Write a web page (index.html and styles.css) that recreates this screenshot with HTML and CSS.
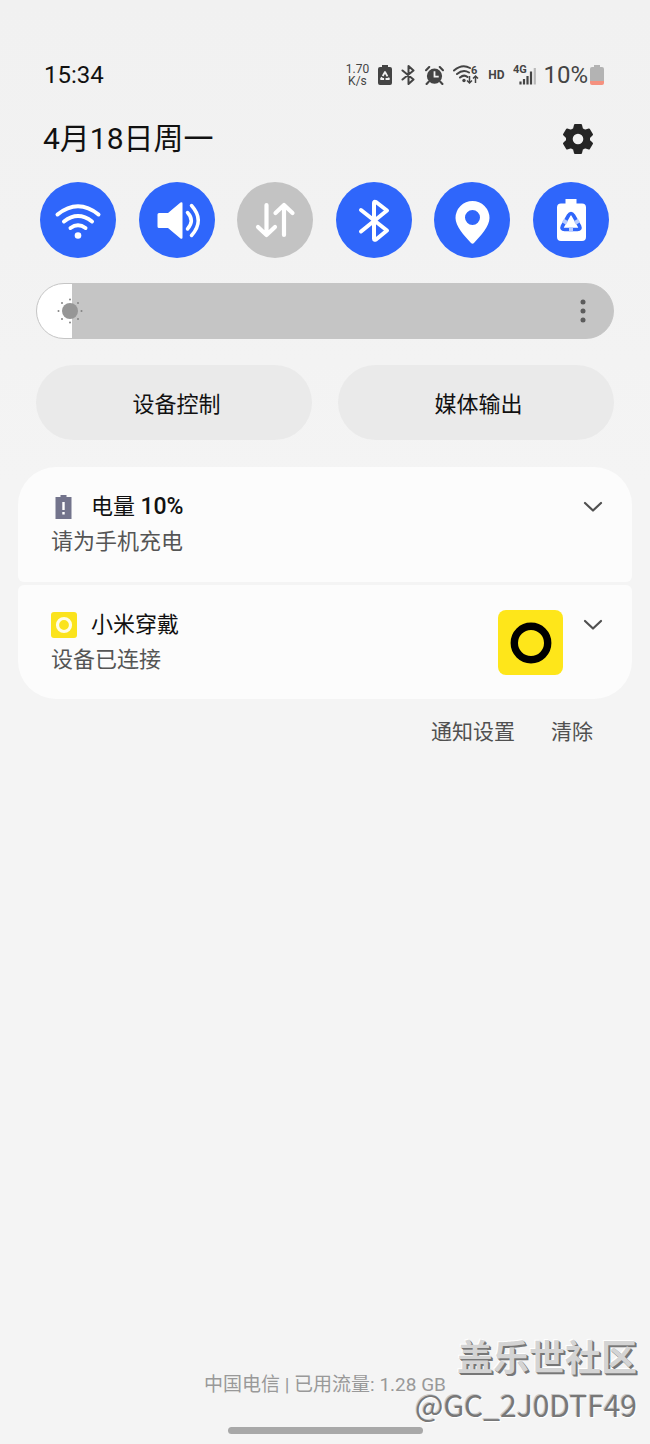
FILE: index.html
```html
<!DOCTYPE html>
<html lang="zh-CN">
<head>
<meta charset="utf-8">
<meta name="viewport" content="width=device-width, initial-scale=1">
<title>通知面板</title>
<link rel="stylesheet" href="styles.css">
</head>
<body>
<div class="panel">
  <header class="status">
    <time class="clock">15:34</time>
    <div class="status-icons">
      <span class="speed"><span>1.70</span><span>K/s</span></span>
      <svg class="i-saver" width="14" height="20" viewBox="0 0 14 20"><path fill="#444" d="M4 0h6v2h2a2 2 0 0 1 2 2v14a2 2 0 0 1-2 2H2a2 2 0 0 1-2-2V4a2 2 0 0 1 2-2h2z"/><path d="M7 7l4 7H3z" fill="none" stroke="#f2f2f2" stroke-width="1.8" stroke-linejoin="round" stroke-dasharray="5 1.5"/></svg>
      <svg class="i-bt" width="15" height="20" viewBox="0 0 14 20"><path d="M1 5.500l11 9-5 4.500V1l5 4.500-11 9" fill="none" stroke="#444" stroke-width="2" stroke-linejoin="round" stroke-linecap="round"/></svg>
      <svg class="i-alarm" width="19" height="19" viewBox="0 0 18 18"><circle cx="9" cy="9.500" r="7.200" fill="#444"/><path d="M1 4l3-3M17 4l-3-3M3.500 15l-2 2M14.500 15l2 2" stroke="#444" stroke-width="2" stroke-linecap="round"/><path d="M9 5v5h4" fill="none" stroke="#f2f2f2" stroke-width="1.700"/></svg>
      <svg class="i-wifi" width="26" height="20" viewBox="0 0 26 20"><g fill="none" stroke="#444" stroke-width="2" stroke-linecap="round"><path d="M1 5.500Q9-1.500 17 3M4 9q6-5 12-1.500M7 12.500q4-3.500 7.500-.5"/></g><circle cx="11" cy="15.500" r="1.700" fill="#444"/><path d="M16.500 11v7m-2.500-2.500l2.500 2.500 2.500-2.500M22.500 18v-7m-2.500 2.500l2.500-2.500 2.500 2.500" fill="none" stroke="#444" stroke-width="1.500"/><text x="18" y="9" class="tiny">6</text></svg>
      <span class="hd">HD</span>
      <svg class="i-signal" width="24" height="24" viewBox="0 0 24 24"><text x="0" y="10" class="tiny">4G</text><path d="M7.500 21.500v-3M11 21.500v-5.500M14.500 21.500V13M18 21.500V8.500" stroke="#444" stroke-width="2.200"/><path d="M21.800 21.500V5" stroke="#b9b9b9" stroke-width="2.200"/></svg>
      <span class="percent">10%</span>
      <svg class="i-batt" width="14" height="20" viewBox="0 0 14 20"><path fill="#b3b3b3" d="M4 0h6v2h2a2 2 0 0 1 2 2v12H0V4a2 2 0 0 1 2-2h2z"/><path fill="#f5917f" d="M0 16h14v2a2 2 0 0 1-2 2H2a2 2 0 0 1-2-2z"/></svg>
    </div>
  </header>

  <div class="date-row">
    <h1 class="date">4月18日周一</h1>
    <button class="icon-button" aria-label="设置"><svg width="32" height="32" viewBox="0 0 32 32"><path fill="#252525" stroke="#252525" stroke-width="2" stroke-linejoin="round" fill-rule="evenodd" d="M13 2h6l1 4 3 1.700 4-1.200 3 5-3 3v3l3 3-3 5-4-1.200L20 26l-1 4h-6l-1-4-3-1.700-4 1.200-3-5 3-3v-3l-3-3 3-5 4 1.200L12 6zM16 9.700a6.300 6.300 0 1 0 0 12.600a6.300 6.300 0 1 0 0-12.600z"/></svg></button>
  </div>

  <div class="tiles">
    <button class="tile" aria-label="WLAN"><svg viewBox="0 0 76 76"><g fill="none" stroke="#fff" stroke-width="4" stroke-linecap="round"><path d="M17.500 32.500Q38 16 58.500 32.500M24 39.500Q38 28.500 52 39.500M30.500 46Q38 40.500 45.500 46"/></g><circle cx="38" cy="53.500" r="3.300" fill="#fff"/></svg></button>
    <button class="tile" aria-label="声音"><svg viewBox="0 0 76 76"><path fill="#fff" d="M20 31h9l12.500-10.500q2-1 2 1v34q0 2-2 1L29 46h-9q-1.500 0-1.500-1.500v-12Q18.500 31 20 31z"/><path d="M48.500 30.500q7.500 8 0 16.500M52.500 23.500q13.500 15 0 30" fill="none" stroke="#fff" stroke-width="3.500" stroke-linecap="round"/></svg></button>
    <button class="tile tile-off" aria-label="移动数据"><svg viewBox="0 0 76 76"><path d="M29.500 23v30M21 45l8.500 8 8.500-8M47 53V23M38.500 31l8.500-8 8.500 8" fill="none" stroke="#fff" stroke-width="4.200" stroke-linecap="round" stroke-linejoin="round"/></svg></button>
    <button class="tile" aria-label="蓝牙"><svg viewBox="0 0 76 76"><path d="M25 28l26 20.500-11 9q-2 1-2-1V21q0-2 2-1l11 8.500L25 49.500" fill="none" stroke="#fff" stroke-width="4" stroke-linecap="round" stroke-linejoin="round"/></svg></button>
    <button class="tile" aria-label="位置"><svg viewBox="0 0 76 76"><path fill="#fff" fill-rule="evenodd" d="M38.500 19A17 17 0 0 0 21.500 36c0 8 8.500 17.500 15.500 25q1.500 1.500 3 0C47 53.500 55.500 44 55.500 36A17 17 0 0 0 38.500 19zM38.500 28a7.500 7.500 0 1 1 0 15a7.500 7.500 0 1 1 0-15z"/></svg></button>
    <button class="tile" aria-label="省电"><svg viewBox="0 0 76 76"><path fill="#fff" d="M32.500 17h11v4.500H49q4 0 4 4V55q0 4-4 4H28q-4 0-4-4V25.500q0-4 4-4h4.500z"/><path d="M35.500 33.500q2.500-4 5 0l6 10.500q1.500 3.500-2 3.500h-13q-3.500 0-2-3.500z" fill="none" stroke="#2f66fb" stroke-width="3.600"/><path d="M38 45.500v4M30 38.500l4 2.500M46 38.500l-4 2.500" stroke="#b8ccff" stroke-width="4"/></svg></button>
  </div>

  <div class="brightness">
    <input class="slider" type="range" min="0" max="100" value="6" aria-label="亮度">
    <svg class="sun" width="26" height="26" viewBox="0 0 26 26"><circle cx="13" cy="13" r="8" fill="#969696"/><g fill="#858585"><circle cx="13" cy="1.500" r="1"/><circle cx="13" cy="24.500" r="1"/><circle cx="1.500" cy="13" r="1"/><circle cx="24.500" cy="13" r="1"/><circle cx="5" cy="5" r="1"/><circle cx="21" cy="5" r="1"/><circle cx="5" cy="21" r="1"/><circle cx="21" cy="21" r="1"/></g></svg>
    <button class="more" aria-label="更多"><svg width="6" height="24" viewBox="0 0 6 24"><g fill="#5c5c5c"><circle cx="3" cy="3" r="2.500"/><circle cx="3" cy="12" r="2.500"/><circle cx="3" cy="21" r="2.500"/></g></svg></button>
  </div>

  <div class="controls">
    <button class="pill">设备控制</button>
    <button class="pill">媒体输出</button>
  </div>

  <main class="notifications">
    <article class="card">
      <svg class="app-icon" width="26" height="26" viewBox="0 0 26 26"><path fill="#73748c" d="M9.500 1h6v2h5v22h-16V3h5z"/><path d="M12.500 8v8M12.500 18v2.500" stroke="#fff" stroke-width="2.400"/></svg>
      <h2 class="title">电量 <b>10%</b></h2>
      <p class="text">请为手机充电</p>
      <button class="expand" aria-label="展开"><svg width="20" height="12" viewBox="0 0 20 12"><path d="M2 2l8 7.500L18 2" fill="none" stroke="#505050" stroke-width="2.200" stroke-linecap="round" stroke-linejoin="round"/></svg></button>
    </article>
    <article class="card">
      <svg class="app-icon" width="26" height="26" viewBox="0 0 26 26"><rect width="26" height="26" rx="3" fill="#fbe31d"/><circle cx="13" cy="13" r="6.500" fill="none" stroke="#fffde8" stroke-width="3.200"/></svg>
      <h2 class="title">小米穿戴</h2>
      <p class="text">设备已连接</p>
      <svg class="large-icon" width="65" height="65" viewBox="0 0 65 65"><rect width="65" height="65" rx="8" fill="#fee61a"/><circle cx="33" cy="33" r="16.700" fill="none" stroke="#000" stroke-width="7.400"/></svg>
      <button class="expand" aria-label="展开"><svg width="20" height="12" viewBox="0 0 20 12"><path d="M2 2l8 7.500L18 2" fill="none" stroke="#505050" stroke-width="2.200" stroke-linecap="round" stroke-linejoin="round"/></svg></button>
    </article>
  </main>

  <div class="actions">
    <button class="action">通知设置</button>
    <button class="action">清除</button>
  </div>

  <footer class="footer">
    <p class="carrier">中国电信 | 已用流量: 1.28 GB</p>
    <div class="home-bar"></div>
  </footer>

  <div class="watermark">
    <span class="community">盖乐世社区</span>
    <span class="user">@GC_2J0DTF49</span>
  </div>
</div>
</body>
</html>
```
FILE: styles.css
```css
* {
  box-sizing: border-box;
}

body {
  margin: 0;
  background: #f4f4f4;
  color: #111;
  font-family: Roboto, "Noto Sans CJK SC", sans-serif;
}

button {
  border: 0;
  padding: 0;
  background: none;
  color: inherit;
  font: inherit;
  cursor: pointer;
}

h1, h2, p {
  margin: 0;
  font-weight: 400;
}

svg {
  display: block;
}

.panel {
  position: relative;
  display: flex;
  flex-direction: column;
  min-height: 100vh;
  padding-top: 59px;
  background: linear-gradient(#f1f1f1, #f2f2f2 240px, #f4f4f4 480px);
}

.status {
  display: flex;
  align-items: center;
  justify-content: space-between;
  height: 32px;
  padding: 0 46px 0 44px;
}

.clock {
  font-size: 24px;
}

.status-icons {
  display: flex;
  align-items: center;
  gap: 9px;
  color: #444;
}

.speed {
  display: flex;
  flex-direction: column;
  align-items: center;
  font-size: 12px;
  line-height: 12px;
}

.hd {
  font-size: 12px;
  font-weight: 700;
}

.tiny {
  fill: #444;
  font-size: 11px;
  font-weight: 700;
}

.percent {
  font-size: 24px;
  margin: 0 -7px 0 -3px;
}

.date-row {
  display: flex;
  align-items: center;
  justify-content: space-between;
  height: 44px;
  margin-top: 26px;
  padding: 0 56px 0 43px;
}

.date {
  font-size: 30px;
  line-height: 44px;
}

.tiles {
  display: flex;
  justify-content: space-between;
  margin-top: 21px;
  padding: 0 41px 0 40px;
}

.tile {
  width: 76px;
  height: 76px;
  border-radius: 50%;
  background: #2f66fb;
}

.tile-off {
  background: #c3c3c3;
}

.brightness {
  position: relative;
  height: 56px;
  margin: 25px 36px 0;
}

.slider {
  display: block;
  width: 100%;
  height: 100%;
  margin: 0;
  border: 1px solid #c5c5c5;
  border-radius: 28px;
  appearance: none;
  background: linear-gradient(to right, #fff 6%, #c5c5c5 6%);
}

.slider::-webkit-slider-thumb {
  appearance: none;
  width: 26px;
  height: 26px;
  opacity: 0;
}

.sun {
  position: absolute;
  top: 15px;
  left: 21px;
  pointer-events: none;
}

.more {
  position: absolute;
  top: 16px;
  right: 28px;
}

.controls {
  display: grid;
  grid-template-columns: 1fr 1fr;
  gap: 26px;
  margin: 26px 36px 0;
}

.pill {
  height: 75px;
  padding: 0 0 2px 5px;
  border-radius: 38px;
  background: #eaeaea;
  font-size: 22px;
}

.notifications {
  display: grid;
  gap: 3px;
  margin: 27px 18px 0;
}

.card {
  display: grid;
  grid-template-columns: 26px 1fr auto 20px;
  grid-template-rows: 34px 35px;
  column-gap: 14px;
  align-items: center;
  padding: 23px 29px 22px 33px;
  border-radius: 6px;
  background: #fcfcfc;
}

.card:first-child {
  padding-bottom: 23px;
  border-top-left-radius: 38px;
  border-top-right-radius: 38px;
}

.card:last-child {
  border-bottom-left-radius: 38px;
  border-bottom-right-radius: 38px;
}

.title {
  font-size: 22px;
  line-height: 34px;
}

.title b {
  font-size: 23px;
  font-weight: 500;
}

.text {
  grid-column: 1 / 3;
  grid-row: 2;
  color: #555;
  font-size: 22px;
  line-height: 34px;
}

.large-icon {
  grid-column: 3;
  grid-row: 1 / 3;
  margin-right: 6px;
}

.expand {
  grid-column: 4;
  grid-row: 1;
}

.actions {
  display: flex;
  justify-content: flex-end;
  gap: 36px;
  margin-top: 17px;
  padding: 0 57px;
}

.action {
  color: #505050;
  font-size: 21px;
  line-height: 32px;
}

.footer {
  display: flex;
  flex-direction: column;
  align-items: center;
  margin-top: auto;
  padding-bottom: 10px;
}

.carrier {
  color: #999;
  font-size: 19px;
  line-height: 28px;
}

.home-bar {
  width: 30%;
  height: 7px;
  margin-top: 28px;
  border-radius: 4px;
  background: #a8a8a8;
}

.watermark {
  position: absolute;
  right: 13px;
  bottom: 18px;
  display: flex;
  flex-direction: column;
  align-items: flex-end;
}

.community {
  color: #d4d4d4;
  font-size: 36px;
  font-weight: 700;
  line-height: 46px;
  text-shadow: 1px 1px #777, 2px 2px #777, -1px -1px #fff;
}

.user {
  color: #777;
  font-family: "Noto Sans CJK SC", sans-serif;
  font-size: 30px;
  line-height: 44px;
  text-shadow: 1px 1px #fff, -1px -1px #c8c8c8;
}
```
